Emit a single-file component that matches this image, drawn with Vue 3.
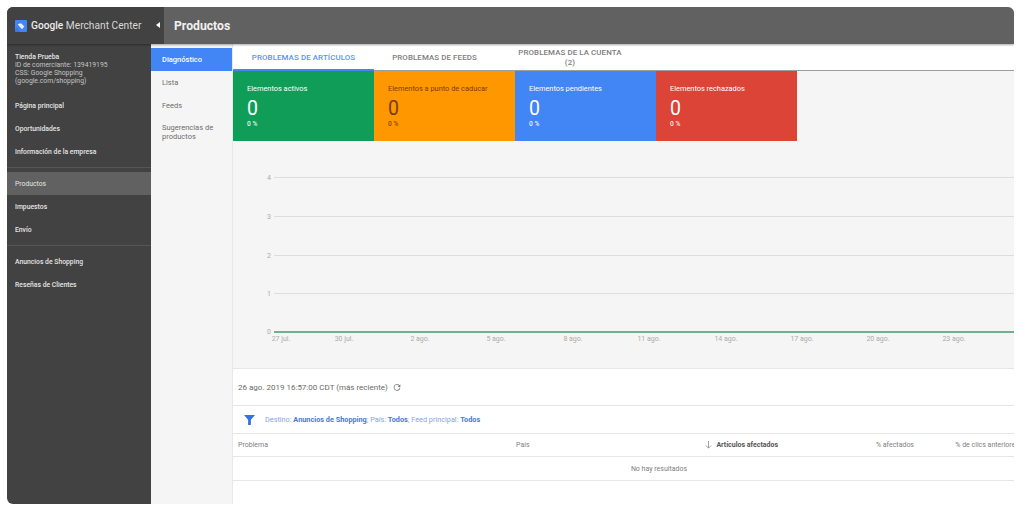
<script setup>
const cards = [
  { label: 'Elementos activos', cls: 'green' },
  { label: 'Elementos a punto de caducar', cls: 'orange' },
  { label: 'Elementos pendientes', cls: 'blue' },
  { label: 'Elementos rechazados', cls: 'red' }
]
const grid = [
  { y: 36.5, n: 4 }, { y: 75.5, n: 3 }, { y: 114.5, n: 2 }, { y: 152.5, n: 1 }
]
const dates = [
  { x: 48, t: '27 jul.' }, { x: 111, t: '30 jul.' }, { x: 187, t: '2 ago.' }, { x: 263, t: '5 ago.' },
  { x: 340, t: '8 ago.' }, { x: 416, t: '11 ago.' }, { x: 493, t: '14 ago.' }, { x: 569, t: '17 ago.' },
  { x: 645, t: '20 ago.' }, { x: 721, t: '23 ago.' }
]
</script>

<template>
  <div class="shell">
    <header class="top">
      <div class="brand">
        <svg class="logo" width="12" height="12" viewBox="0 0 12 12">
          <rect width="12" height="12" rx="1" fill="#4285f4" />
          <path d="M2.6 4.2 L6 3.2 L9.4 6.4 L7 9.2 Z" fill="#e8eefc" />
          <path d="M0 9.5 L2 7 L5 12 L1 12 Z" fill="#3367d6" opacity=".5" />
        </svg>
        <span class="brand-name"><b>Google</b> Merchant Center</span>
        <svg class="collapse" width="4" height="6" viewBox="0 0 4 6"><path d="M4 0 V6 L0 3 Z" fill="#fff" /></svg>
      </div>
      <h1 class="title">Productos</h1>
    </header>

    <div class="body">
      <nav class="side">
        <div class="store">
          <strong>Tienda Prueba</strong>
          <span>ID de comerciante: 139419195</span>
          <span>CSS: Google Shopping</span>
          <span>(google.com/shopping)</span>
        </div>
        <a class="link">Página principal</a>
        <a class="link">Oportunidades</a>
        <a class="link">Información de la empresa</a>
        <hr class="sep" />
        <a class="link on">Productos</a>
        <a class="link">Impuestos</a>
        <a class="link">Envío</a>
        <hr class="sep second" />
        <a class="link">Anuncios de Shopping</a>
        <a class="link">Reseñas de Clientes</a>
      </nav>

      <aside class="sub">
        <a class="sub-item active">Diagnóstico</a>
        <a class="sub-item">Lista</a>
        <a class="sub-item">Feeds</a>
        <a class="sub-item multi">Sugerencias de productos</a>
      </aside>

      <main class="main">
        <div class="tabs">
          <div class="tab t1 current">PROBLEMAS DE ARTÍCULOS</div>
          <div class="tab t2">PROBLEMAS DE FEEDS</div>
          <div class="tab t3">PROBLEMAS DE LA CUENTA<br />(2)</div>
        </div>

        <section class="cards">
          <div v-for="c in cards" :key="c.cls" class="card" :class="c.cls">
            <div class="c-label">{{ c.label }}</div>
            <div class="c-num">0</div>
            <div class="c-pct">0 %</div>
          </div>
        </section>

        <section class="chart">
          <svg width="781" height="227" viewBox="0 0 781 227">
            <g v-for="g in grid" :key="g.n">
              <line x1="41" x2="781" :y1="g.y" :y2="g.y" stroke="#dddddd" />
              <text x="34" :y="g.y + 2.5" class="axis" text-anchor="start">{{ g.n }}</text>
            </g>
            <text x="34" y="193" class="axis">0</text>
            <line x1="41" x2="781" y1="191" y2="191" stroke="#3f9a6b" stroke-width="1.3" />
            <text v-for="d in dates" :key="d.t" :x="d.x" y="200" class="axis" text-anchor="middle">{{ d.t }}</text>
          </svg>
        </section>

        <div class="stamp">
          <span>26 ago. 2019 16:57:00 CDT (más reciente)</span>
          <svg width="8" height="8" viewBox="0 0 24 24"><path d="M19.5 6.5A10 10 0 1 0 22 14h-2.4a7.7 7.7 0 1 1-1.9-6L14 12h8V4z" fill="#757575" /></svg>
        </div>

        <div class="filter">
          <svg width="11" height="10" viewBox="0 0 11 10"><path d="M0 0H11L6.9 4.8V10H4.1V4.8Z" fill="#2f74e0" /></svg>
          <span>Destino: <b>Anuncios de Shopping</b>; País: <b>Todos</b>; Feed principal: <b>Todos</b></span>
        </div>

        <div class="table-clip">
          <div class="thead">
            <span>Problema</span>
            <span>País</span>
            <span class="sorted">
              <svg width="7" height="8" viewBox="0 0 7 8"><path d="M3.5 0V7M.8 4.4 3.5 7.2 6.2 4.4" stroke="#9a9a9a" fill="none" stroke-width=".9" /></svg>
              <b>Artículos afectados</b>
            </span>
            <span class="num">% afectados</span>
            <span class="num">% de clics anteriores</span>
          </div>
          <div class="empty">No hay resultados</div>
        </div>
      </main>
    </div>
  </div>
</template>

<style scoped>
.shell {
  margin: 7px 0 0 7px;
  width: 1007px;
  height: 497px;
  border-radius: 6px 6px 0 6px;
  overflow: hidden;
  display: flex;
  flex-direction: column;
  background: #fff;
  font-family: Roboto, "Liberation Sans", sans-serif;
}
.top {
  height: 37px;
  flex: none;
  display: flex;
  background: #616161;
  box-shadow: 0 1px 2px rgba(0, 0, 0, .35);
  position: relative;
  z-index: 2;
}
.brand {
  width: 157px;
  background: #424242;
  display: flex;
  align-items: center;
  padding-left: 8px;
  box-sizing: border-box;
  position: relative;
}
.logo { flex: none; }
.brand-name {
  margin-left: 4px;
  color: #d8d8d8;
  font-size: 10.2px;
  white-space: nowrap;
}
.brand-name b { font-weight: 500; color: #ececec; }
.collapse { position: absolute; left: 149px; top: 15px; }
.title {
  margin: 0 0 0 10px;
  align-self: center;
  color: #f1f1f1;
  font-size: 12.2px;
  font-weight: 700;
}
.body { flex: 1; display: flex; min-height: 0; }
.side {
  width: 144px;
  flex: none;
  background: #424242;
  color: #e6e6e6;
  display: flex;
  flex-direction: column;
  padding-top: 9px;
  box-sizing: border-box;
}
.store {
  padding-left: 8px;
  display: flex;
  flex-direction: column;
  font-size: 6.8px;
  line-height: 8px;
  color: #c4c4c4;
  margin-bottom: 9px;
}
.store strong { font-weight: 500; color: #e6e6e6; }
.link {
  height: 23px;
  flex: none;
  display: flex;
  align-items: center;
  padding-left: 8px;
  font-size: 6.8px;
  font-weight: 500;
  color: #e4e4e4;
}
.link.on { background: #616161; font-weight: 400; }
.sep {
  margin: 4px 0;
  border: 0;
  border-top: 1px solid #555;
  height: 0;
}
.sub {
  width: 82px;
  flex: none;
  background: #f5f5f5;
  padding-top: 4px;
  box-sizing: border-box;
  border-right: 1px solid #e8e8e8;
}
.sub-item {
  height: 23px;
  display: flex;
  align-items: center;
  padding: 0 11px;
  font-size: 7.5px;
  color: #6e6e6e;
}
.sub-item.active { background: #4285f4; color: #fff; font-weight: 500; }
.sub-item.multi { height: 30px; line-height: 9px; padding-right: 6px; }
.main {
  flex: 1;
  min-width: 0;
  display: flex;
  flex-direction: column;
}
.tabs {
  height: 27px;
  flex: none;
  display: flex;
  background: #fff;
  box-shadow: inset 0 -1px 0 #9e9e9e;
}
.tab {
  display: flex;
  align-items: center;
  justify-content: center;
  text-align: center;
  font-size: 7.9px;
  font-weight: 500;
  line-height: 10px;
  letter-spacing: .1px;
  color: #7d7d7d;
  flex: none;
  box-sizing: border-box;
}
.t1 { width: 141px; }
.t2 { width: 121px; }
.t3 { width: 150px; }
.current { color: #5c93ee; box-shadow: inset 0 -2px 0 #4285f4; }
.cards { display: flex; height: 70px; flex: none; background: #f5f5f5; }
.card {
  width: 141px;
  box-sizing: border-box;
  padding: 13px 0 0 14px;
  color: #fff;
}
.green { background: #0f9d58; }
.orange { background: #ff9800; color: #7a3c00; }
.blue { background: #4285f4; }
.red { background: #db4437; }
.c-label { font-size: 7.4px; line-height: 9px; }
.c-num { font-size: 19.5px; line-height: 21px; margin-top: 5px; }
.c-pct { font-size: 6.6px; font-weight: 500; line-height: 8px; margin-top: 1px; opacity: .9; }
.chart { height: 228px; flex: none; background: #f5f5f5; border-bottom: 1px solid #e6e6e6; box-sizing: border-box; }
.chart svg { display: block; }
.axis { font-size: 7px; fill: #ababab; font-family: Roboto, sans-serif; }
.stamp {
  height: 37px;
  flex: none;
  box-sizing: border-box;
  border-bottom: 1px solid #e6e6e6;
  display: flex;
  align-items: center;
  gap: 5px;
  padding-left: 5px;
  font-size: 8px;
  color: #6a6a6a;
}
.filter {
  height: 28px;
  flex: none;
  box-sizing: border-box;
  border-bottom: 1px solid #e6e6e6;
  display: flex;
  align-items: center;
  gap: 10px;
  padding-left: 11px;
  font-size: 7.3px;
  color: #86a5de;
}
.filter b { color: #4a78cd; font-weight: 700; }
.table-clip { overflow: hidden; flex: 1; }
.thead {
  width: 852px;
  height: 23px;
  box-sizing: border-box;
  border-bottom: 1px solid #e6e6e6;
  display: grid;
  grid-template-columns: 278px 60px 202px 136px 105px;
  align-items: center;
  padding-left: 5px;
  font-size: 7px;
  color: #808080;
}
.sorted {
  display: flex;
  justify-content: flex-end;
  align-items: center;
  gap: 4px;
}
.sorted b { color: #555; font-weight: 700; }
.num { text-align: right; white-space: nowrap; }
.empty {
  width: 852px;
  height: 24px;
  box-sizing: border-box;
  border-bottom: 1px solid #e6e6e6;
  display: flex;
  align-items: center;
  justify-content: center;
  font-size: 7px;
  color: #808080;
}
</style>
